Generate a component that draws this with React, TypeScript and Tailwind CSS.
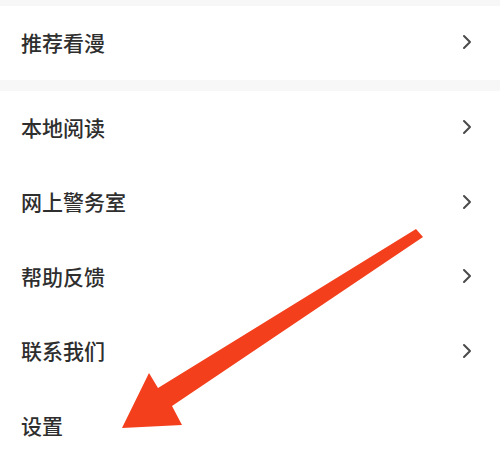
import { ChevronRight } from 'lucide-react';

const topItems = ['推荐看漫'];
const items = ['本地阅读', '网上警务室', '帮助反馈', '联系我们'];

const Row = ({ label, arrow = true, tall }: { label: string; arrow?: boolean; tall: string }) => (
  <div className={`flex items-center justify-between bg-white pb-[2px] pl-[21px] pr-[21px] ${tall}`}>
    <span className="text-[21px] font-medium leading-none text-[#2e2e2e]">{label}</span>
    {arrow && <ChevronRight className="h-6 w-6 text-[#4a4a4a]" strokeWidth={2} />}
  </div>
);

export default function App() {
  return (
    <div
      className="relative h-[452px] w-[500px] overflow-hidden bg-[#f7f7f7]"
      style={{ fontFamily: '"Noto Sans CJK SC", "Noto Sans", sans-serif' }}
    >
      <div className="mt-[6px]">
        {topItems.map((t) => (
          <Row key={t} label={t} tall="h-[74px]" />
        ))}
      </div>
      <div className="mt-[11px] bg-white">
        {items.map((t) => (
          <Row key={t} label={t} tall="h-[74.5px]" />
        ))}
        <Row label="设置" arrow={false} tall="h-[74.5px]" />
      </div>

      {/* red annotation arrow */}
      <svg className="absolute left-0 top-0" width="500" height="452" viewBox="0 0 500 452">
        <polygon
          points="416,229 423,237 172,406 182,425 122,428 149,373 158,388"
          fill="#f43f1d"
        />
      </svg>
    </div>
  );
}
